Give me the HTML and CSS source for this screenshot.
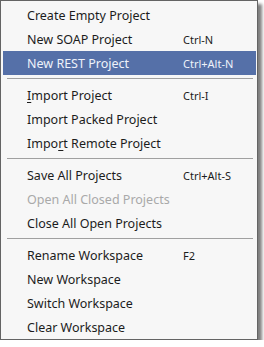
FILE: index.html
```html
<!DOCTYPE html>
<html lang="en">
<head>
  <meta charset="UTF-8">
  <meta name="viewport" content="width=device-width, initial-scale=1.0">
  <title>Project Menu</title>
  <link rel="stylesheet" href="styles.css">
</head>
<body>
  <div class="menu">
    <div class="item"><span class="label">Create Empty Project</span></div>
    <div class="item"><span class="label">New SOAP Project</span><span class="key">Ctrl-N</span></div>
    <div class="item active"><span class="label">New REST Project</span><span class="key">Ctrl+Alt-N</span></div>
    <div class="sep"></div>
    <div class="item"><span class="label"><u>I</u>mport Project</span><span class="key">Ctrl-I</span></div>
    <div class="item"><span class="label">Import Packed Project</span></div>
    <div class="item"><span class="label">Impo<u>r</u>t Remote Project</span></div>
    <div class="sep"></div>
    <div class="item"><span class="label">Save All Projects</span><span class="key">Ctrl+Alt-S</span></div>
    <div class="item disabled"><span class="label">Open All Closed Projects</span></div>
    <div class="item"><span class="label">Close All Open Projects</span></div>
    <div class="sep"></div>
    <div class="item"><span class="label">Rename Workspace</span><span class="key">F2</span></div>
    <div class="item"><span class="label">New Workspace</span></div>
    <div class="item"><span class="label">Switch Workspace</span></div>
    <div class="item"><span class="label">Clear Workspace</span></div>
  </div>
</body>
</html>
```

FILE: styles.css
```css
* {
  margin: 0;
  padding: 0;
  box-sizing: border-box;
}

body {
  background: #ffffff;
  font-family: 'Noto Sans', sans-serif;
  font-size: 12.5px;
  color: #1c1c1c;
}

/* Popup menu */
.menu {
  width: 258px;
  height: 340px;
  background: #f7f7f7;
  border: 1px solid #646464;
  padding: 2px 1px 0 2px;
  box-shadow: 4px 4px 3px rgba(0, 0, 0, 0.5);
}

.item {
  display: grid;
  grid-template-columns: 156px 1fr;
  align-items: center;
  height: 24px;
  padding-left: 24px;
  white-space: nowrap;
}

.item u {
  text-decoration: underline;
  text-underline-offset: 2px;
}

.item.active {
  background: #5570a8;
  color: #eef2fa;
}

.item.disabled {
  color: #a9a9a9;
}

.key {
  font-size: 11px;
}

.sep {
  height: 8px;
  padding: 3px 3px 0 4px;
}

.sep::before {
  content: "";
  display: block;
  height: 1px;
  background: #a0a0a0;
}
```
